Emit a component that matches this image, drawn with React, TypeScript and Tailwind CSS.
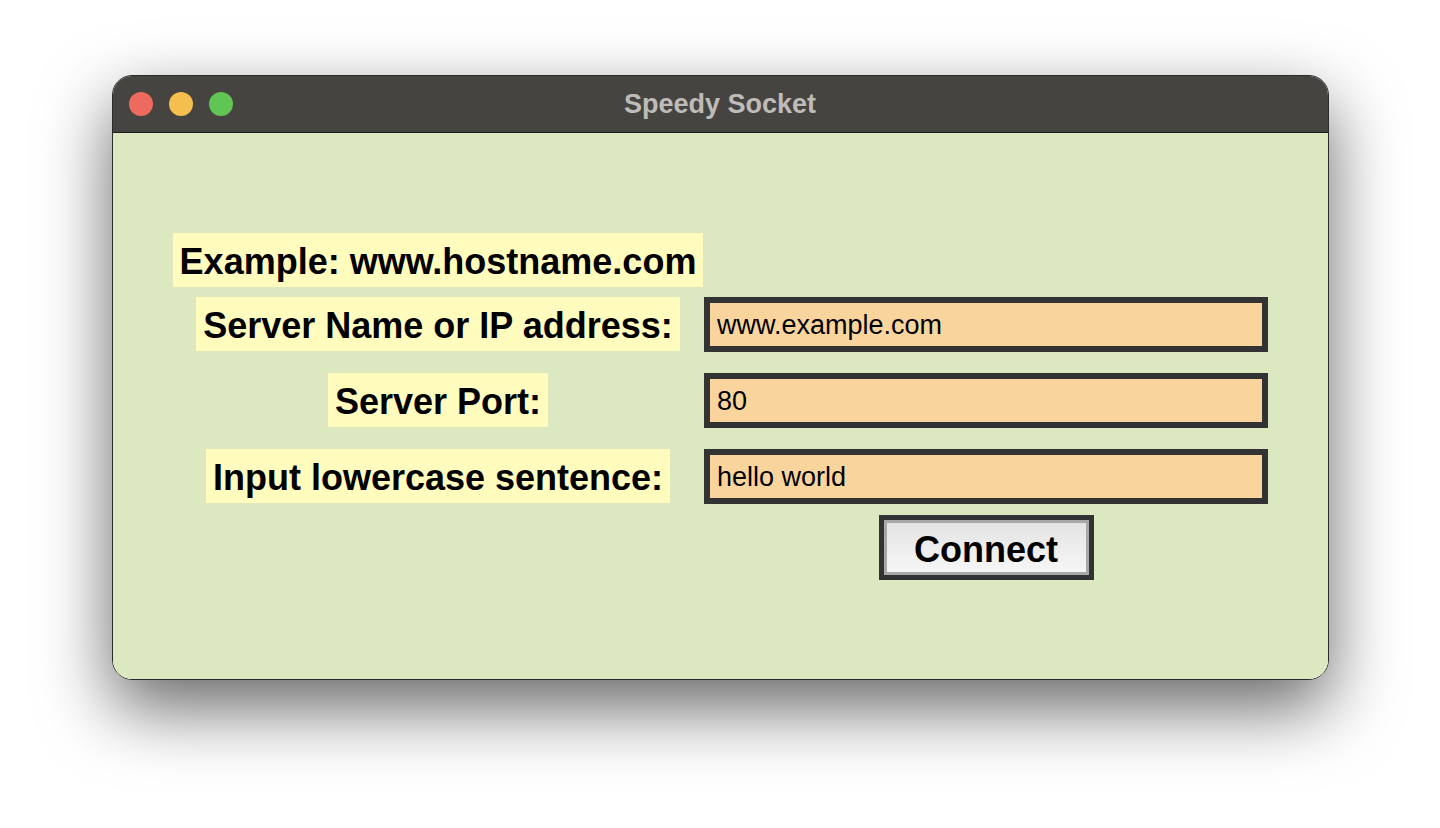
import React, { useState } from 'react';

const labelCls =
  "bg-[#fffcbd] px-[7px] pt-[9px] pb-[5px] text-[36px] leading-[40px] font-bold text-black whitespace-nowrap";

const entryCls =
  "w-full h-[55px] border-[6px] border-[#333333] bg-[#f9d59d] pl-[7px] pt-[2px] text-[27px] text-black outline-none font-['Liberation_Sans',Arial,sans-serif]";

const App: React.FC = () => {
  const [host, setHost] = useState('www.example.com');
  const [port, setPort] = useState('80');
  const [sentence, setSentence] = useState('hello world');

  return (
    <div className="min-h-[828px] w-full bg-white pt-[75px] font-['Liberation_Sans',Arial,sans-serif]">
      <div className="mx-auto w-[1217px] h-[605px] rounded-[20px] border border-[#2b2b2b] overflow-hidden flex flex-col shadow-[0_28px_70px_rgba(0,0,0,0.6)]">
        {/* title bar */}
        <div className="relative h-[57px] shrink-0 bg-[#464440] border-b border-[#1c1c1c] flex items-center">
          <div className="flex items-center gap-4 pl-4">
            <span className="block w-6 h-6 rounded-full bg-[#ee6a5f]" />
            <span className="block w-6 h-6 rounded-full bg-[#f5be4f]" />
            <span className="block w-6 h-6 rounded-full bg-[#61c554]" />
          </div>
          <div className="absolute inset-0 flex items-center justify-center text-[27px] font-bold text-[#bebcb9]">
            Speedy Socket
          </div>
        </div>

        {/* content */}
        <div className="flex-1 bg-[#dce8c0] flex items-center justify-center">
          <div className="flex flex-col">
            <div className="flex">
              <div className="w-[532px] flex justify-center">
                <span className={labelCls}>Example: www.hostname.com</span>
              </div>
              <div className="w-[564px]" />
            </div>

            <div className="flex items-center mt-[10px]">
              <div className="w-[532px] flex justify-center">
                <span className={labelCls}>Server Name or IP address:</span>
              </div>
              <div className="w-[564px]">
                <input className={entryCls} value={host} onChange={e => setHost(e.target.value)} />
              </div>
            </div>

            <div className="flex items-center mt-[21px]">
              <div className="w-[532px] flex justify-center">
                <span className={labelCls}>Server Port:</span>
              </div>
              <div className="w-[564px]">
                <input className={entryCls} value={port} onChange={e => setPort(e.target.value)} />
              </div>
            </div>

            <div className="flex items-center mt-[21px]">
              <div className="w-[532px] flex justify-center">
                <span className={labelCls}>Input lowercase sentence:</span>
              </div>
              <div className="w-[564px]">
                <input className={entryCls} value={sentence} onChange={e => setSentence(e.target.value)} />
              </div>
            </div>

            <div className="flex mt-[11px]">
              <div className="w-[532px]" />
              <div className="w-[564px] flex justify-center">
                <button
                  type="button"
                  className="w-[215px] h-[65px] border-[5px] border-[#333333] bg-[#333333]"
                >
                  <span className="flex w-full h-full items-center justify-center pt-[5px] border-[3px] border-[#a8a8a8] bg-gradient-to-b from-[#e4e4e4] to-[#f6f6f6] text-[36px] leading-[40px] font-bold text-black font-['Liberation_Sans',Arial,sans-serif]">
                    Connect
                  </span>
                </button>
              </div>
            </div>
          </div>
        </div>
      </div>
    </div>
  );
};

export default App;
